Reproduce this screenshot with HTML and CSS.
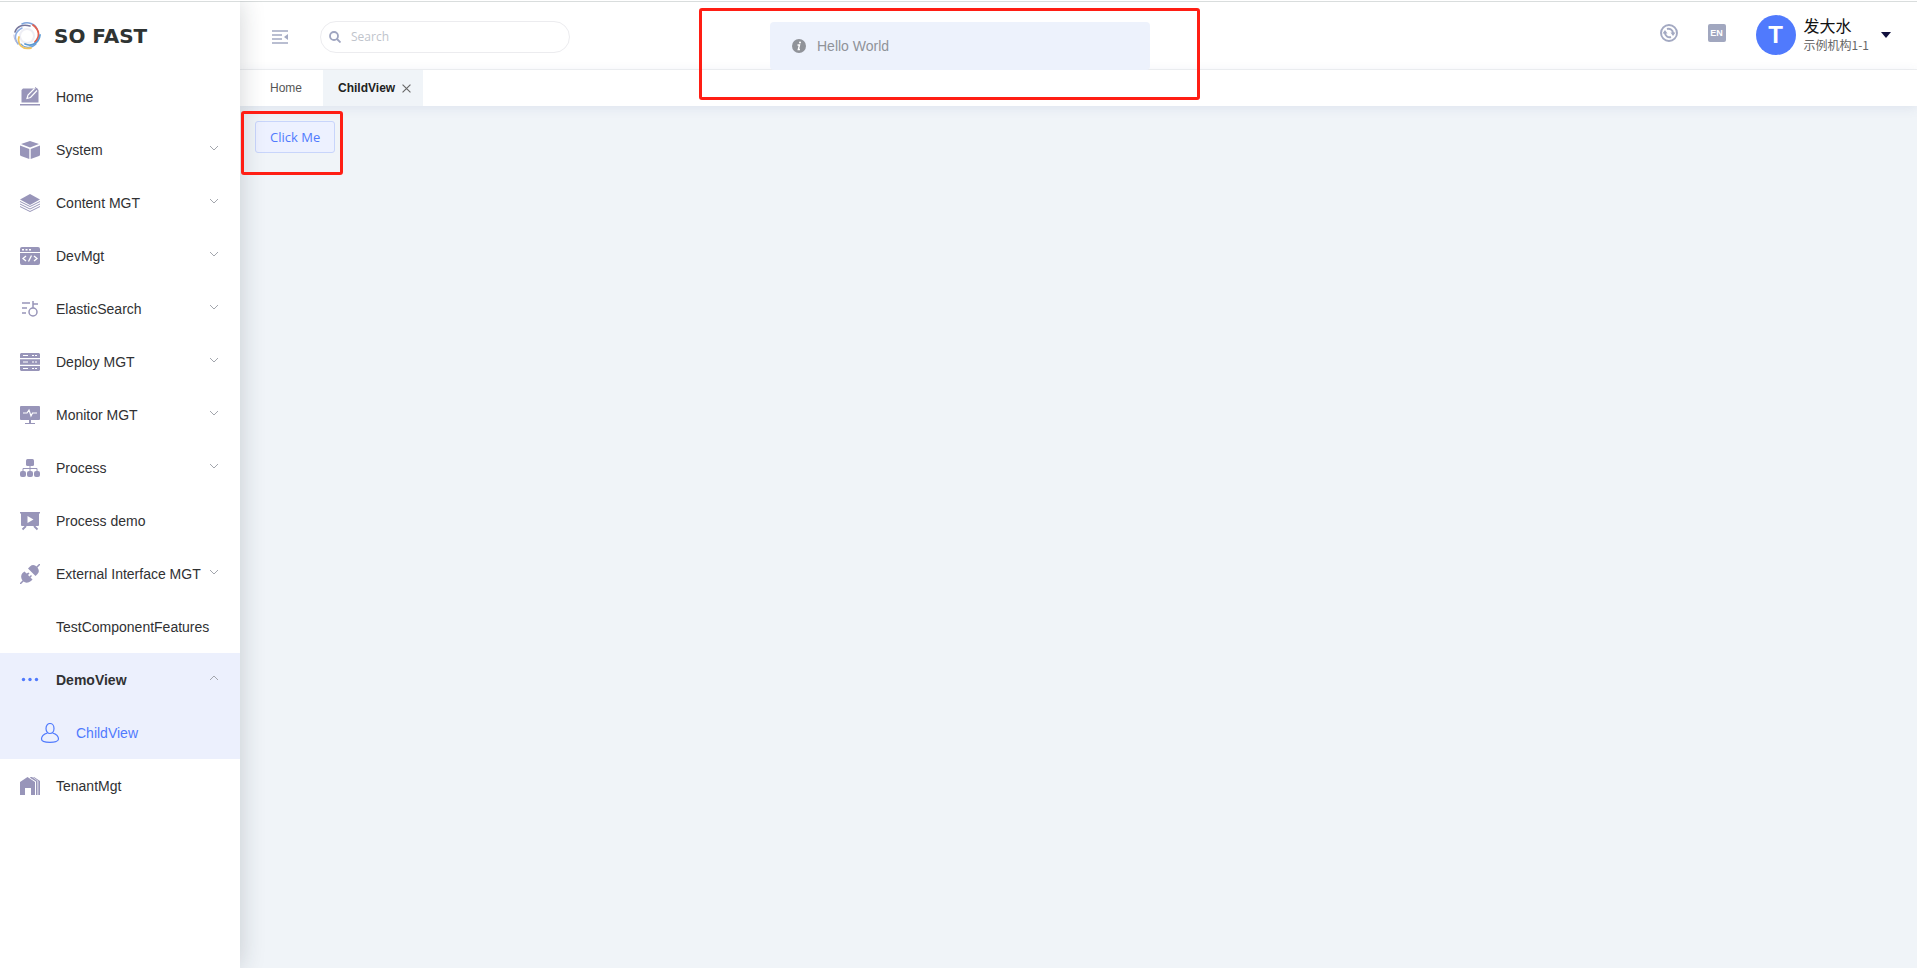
FILE: index.html
```html
<!DOCTYPE html>
<html lang="en">

<head>
  <meta charset="UTF-8" />
  <meta name="viewport" content="width=device-width, initial-scale=1.0" />
  <title>SO FAST</title>
  <link rel="stylesheet" href="styles.css">
</head>

<body>
  <div class="app">
    <aside class="sidebar">
      <a class="logo" href="#">
        <svg class="logo-icon" viewBox="0 0 28 28" fill="none" stroke-linecap="round">
          <circle cx="14" cy="14" r="7" stroke="#eeeef4" stroke-width="2" />
          <path d="M2 10C4 4 10 2 17 4" stroke="#77779c" stroke-width="1.6" />
          <path d="M9 2C15-1 22 2 24 7" stroke="#7fa5dc" stroke-width="1.5" />
          <path d="M20 3C27 8 27 15 22 20" stroke="#e2604f" stroke-width="1.8" />
          <path d="M27 13C26 21 19 25 12 22" stroke="#5c9bd4" stroke-width="1.8" />
          <path d="M23 22C18 27 11 26 8 22" stroke="#6fa0d8" stroke-width="1.2" />
          <path d="M18 26C9 28 4 22 6 15" stroke="#f1c45e" stroke-width="1.8" />
          <path d="M5 22C0 15 3 9 9 6" stroke="#8fb0e4" stroke-width="1.5" />
          <path d="M1 13C1 16 2 19 4 21" stroke="#b9b9d8" stroke-width="1" />
        </svg>
        <span class="logo-text">SO FAST</span>
      </a>

      <nav class="menu">
        <a class="menu-item" href="#">
          <svg class="icon" viewBox="0 0 20 20">
            <path fill="currentColor" d="M3 1.500H17L18.500 3V15.500H1.500V3ZM0 17H20V18.500H0Z" />
            <path fill="none" stroke="#fff" stroke-width="1.200" d="M14.500 1.500L8 8L7 11.500L10.500 10.500L17 3.500" />
            <path fill="none" stroke="currentColor" stroke-width="1" d="M15 .5L17.500 2" />
          </svg>
          <span class="menu-text">Home</span>
        </a>
        <a class="menu-item" href="#">
          <svg class="icon" viewBox="0 0 20 20">
            <path fill="currentColor" d="M10 1L19 4L10 7.500L1 4ZM0 5.500L9.300 9V19L1 16Q0 15.500 0 14.500ZM20 5.500L10.700 9V19L19 16Q20 15.500 20 14.500Z" />
          </svg>
          <span class="menu-text">System</span>
          <svg class="arrow" viewBox="0 0 10 6"><path d="M1 1L5 5L9 1" /></svg>
        </a>
        <a class="menu-item" href="#">
          <svg class="icon" viewBox="0 0 20 20">
            <path fill="currentColor" d="M10 1L20 6.500L10 12L0 6.500Z" />
            <path fill="none" stroke="currentColor" stroke-width="1" d="M0 8.500L10 13.500L20 8.500M0 11L10 16L20 11M0 13.500L10 18.500L20 13.500" />
          </svg>
          <span class="menu-text">Content MGT</span>
          <svg class="arrow" viewBox="0 0 10 6"><path d="M1 1L5 5L9 1" /></svg>
        </a>
        <a class="menu-item" href="#">
          <svg class="icon" viewBox="0 0 20 20">
            <path fill="currentColor" d="M2 1H18Q20 1 20 3V6H0V3Q0 1 2 1ZM0 7H20V17Q20 19 18 19H2Q0 19 0 17Z" />
            <path fill="#fff" d="M2 3H4V4.500H2ZM5.500 3H7.500V4.500H5.500ZM9 3H11V4.500H9Z" />
            <path fill="none" stroke="#fff" stroke-width="1.300" d="M6 10L3 12.500L6 15M14 10L17 12.500L14 15M11.500 9.500L8.500 15.500" />
          </svg>
          <span class="menu-text">DevMgt</span>
          <svg class="arrow" viewBox="0 0 10 6"><path d="M1 1L5 5L9 1" /></svg>
        </a>
        <a class="menu-item" href="#">
          <svg class="icon" viewBox="0 0 20 20" fill="none" stroke="currentColor" stroke-width="1.500">
            <path d="M2 4H10M2 9H7M2 14H6M13 2V9M13 5H18" />
            <circle cx="13" cy="13" r="4" />
          </svg>
          <span class="menu-text">ElasticSearch</span>
          <svg class="arrow" viewBox="0 0 10 6"><path d="M1 1L5 5L9 1" /></svg>
        </a>
        <a class="menu-item" href="#">
          <svg class="icon" viewBox="0 0 20 20">
            <path fill="currentColor" d="M1 1H19L20 2V6H0V2ZM0 7.300H20V12.700H0ZM0 14H20V18L19 19H1L0 18Z" />
            <path stroke="#fff" stroke-width="1.200" d="M3 3.500H8M12 3.500H14M15 3.500H17M3 10H8M12 10H14M15 10H17M3 16.500H8M12 16.500H14M15 16.500H17" />
          </svg>
          <span class="menu-text">Deploy MGT</span>
          <svg class="arrow" viewBox="0 0 10 6"><path d="M1 1L5 5L9 1" /></svg>
        </a>
        <a class="menu-item" href="#">
          <svg class="icon" viewBox="0 0 20 20">
            <path fill="currentColor" d="M1 1H19Q20 1 20 2V14Q20 15 19 15H11V18H15V19H5V18H9V15H1Q0 15 0 14V2Q0 1 1 1Z" />
            <path fill="none" stroke="#fff" stroke-width="1.200" d="M3 8H7L9 5L11 11L12.500 8H17" />
          </svg>
          <span class="menu-text">Monitor MGT</span>
          <svg class="arrow" viewBox="0 0 10 6"><path d="M1 1L5 5L9 1" /></svg>
        </a>
        <a class="menu-item" href="#">
          <svg class="icon" viewBox="0 0 20 20" fill="currentColor">
            <rect x="6" y="1" width="8" height="7" rx="1.500" />
            <path fill="none" stroke="currentColor" d="M10 8V13M3 13V10.500H17V13" />
            <rect x="0" y="13" width="6" height="6" rx="2" />
            <rect x="7" y="13" width="6" height="6" rx="2" />
            <rect x="14" y="13" width="6" height="6" rx="2" />
          </svg>
          <span class="menu-text">Process</span>
          <svg class="arrow" viewBox="0 0 10 6"><path d="M1 1L5 5L9 1" /></svg>
        </a>
        <a class="menu-item" href="#">
          <svg class="icon" viewBox="0 0 20 20">
            <path fill="currentColor" d="M0 1H20V2.500H19V14Q19 15 18 15H2Q1 15 1 14V2.500H0Z" />
            <path fill="#fff" d="M7.500 5L13.500 8.500L7.500 12Z" />
            <path stroke="currentColor" stroke-width="1.800" d="M6 15L2.500 18.500M14 15L17.500 18.500" />
          </svg>
          <span class="menu-text">Process demo</span>
        </a>
        <a class="menu-item" href="#">
          <svg class="icon" viewBox="0 0 20 20">
            <path stroke="currentColor" stroke-width="1.500" d="M0 20L4 16M16 4L20 0" />
            <path fill="currentColor" d="M2.500 9L4.500 7.500L6.500 9.500L8.500 8.500L9.500 9.500L8 11L9.500 12.500L11 11L12 12L10.500 13.500L12.500 15.500L11 17Q6.500 20.500 3 17Q-.5 13 2.500 9ZM8 4.500L10 2.500Q13.500-.5 17 3Q20.500 7 17.500 10L15.500 12Z" />
          </svg>
          <span class="menu-text">External Interface MGT</span>
          <svg class="arrow" viewBox="0 0 10 6"><path d="M1 1L5 5L9 1" /></svg>
        </a>
        <a class="menu-item" href="#">
          <span class="icon"></span>
          <span class="menu-text">TestComponentFeatures</span>
        </a>
        <div class="submenu">
          <a class="menu-item opened" href="#">
            <svg class="icon" viewBox="0 0 20 20" fill="currentColor">
              <circle cx="3.500" cy="9.500" r="1.700" />
              <circle cx="10" cy="9.500" r="1.700" />
              <circle cx="16.500" cy="9.500" r="1.700" />
            </svg>
            <span class="menu-text">DemoView</span>
            <svg class="arrow" viewBox="0 0 10 6"><path d="M1 5L5 1L9 5" /></svg>
          </a>
          <a class="menu-item child" href="#">
            <svg class="icon" viewBox="0 0 20 20" fill="none" stroke="currentColor" stroke-width="1.200">
              <ellipse cx="10" cy="5.500" rx="4" ry="5" />
              <path d="M7.500 10C4 11 1.500 13 1.500 16C1.500 18.500 6 19.300 10 19.300S18.500 18.500 18.500 16C18.500 13 16 11 12.500 10" />
            </svg>
            <span class="menu-text">ChildView</span>
          </a>
        </div>
        <a class="menu-item" href="#">
          <svg class="icon" viewBox="0 0 20 20" fill="currentColor">
            <path d="M0 6L7.500 1L15 6V19H11V12H5V19H0Z" />
            <path d="M10.500 1H12L17.500 5V19H16V5.500L10 1.800Z" />
            <path d="M14 1L20 5V19H18.300V5L13 1.300Z" />
          </svg>
          <span class="menu-text">TenantMgt</span>
        </a>
      </nav>
    </aside>

    <div class="main">
      <header class="header">
        <button class="icon-button" type="button" aria-label="Collapse menu">
          <svg class="fold-icon" viewBox="0 0 16 14">
            <path stroke="currentColor" stroke-width="1.400" d="M0 1H16M0 5H10M0 9H10M0 13H16" />
            <path fill="currentColor" d="M16 4V10L12 7Z" />
          </svg>
        </button>
        <label class="search">
          <svg class="search-icon" viewBox="0 0 12 12" fill="none" stroke="currentColor" stroke-width="1.800">
            <circle cx="5" cy="5" r="4" />
            <path d="M8 8L11.500 11.500" />
          </svg>
          <input class="search-input" type="text" placeholder="Search" aria-label="Search">
        </label>
        <div class="tools">
          <button class="icon-button" type="button" aria-label="Refresh">
            <svg class="tool-icon" viewBox="0 0 18 18" fill="none" stroke="currentColor">
              <circle cx="9" cy="9" r="8" stroke-width="1.900" />
              <path stroke-width="2" d="M7 5A4.500 4.500 0 0 1 13 9M11 13A4.500 4.500 0 0 1 5 9" />
              <path fill="currentColor" stroke="none" d="M10.500 8.500H15.500L13 12ZM2.500 9.500H7.500L5 6Z" />
            </svg>
          </button>
          <button class="lang" type="button">EN</button>
        </div>
        <button class="user" type="button">
          <span class="avatar">T</span>
          <span class="user-info">
            <span class="user-name">发大水</span>
            <span class="user-org">示例机构1-1</span>
          </span>
          <span class="caret"></span>
        </button>
      </header>

      <div class="tabs">
        <a class="tab" href="#">Home</a>
        <a class="tab active" href="#">ChildView
          <svg class="tab-close" viewBox="0 0 8 8"><path d="M.5 .5L7.500 7.500M7.500 .5L.5 7.500" /></svg>
        </a>
      </div>

      <main class="content">
        <button class="button" type="button">Click Me</button>
      </main>
    </div>
  </div>

  <div class="message" role="alert">
    <svg class="message-icon" viewBox="0 0 14 14">
      <circle cx="7" cy="7" r="7" fill="#909399" />
      <path fill="none" stroke="#fff" stroke-width="1.400" d="M5.500 6H7.500L6.300 10.500H8" />
      <circle cx="8" cy="3.500" r="1" fill="#fff" />
    </svg>
    <span>Hello World</span>
  </div>

  <div class="mark mark-message"></div>
  <div class="mark mark-button"></div>
</body>

</html>
```
FILE: styles.css
```css
* {
  box-sizing: border-box;
}

body {
  margin: 0;
  font-family: "Liberation Sans", Arial, "Noto Sans CJK SC", sans-serif;
  font-size: 14px;
  color: #303133;
  background-color: #f0f4f8;
}

a {
  color: inherit;
  text-decoration: none;
}

button {
  font-family: inherit;
  cursor: pointer;
}

.app {
  display: flex;
  min-height: 100vh;
  border-top: 1px solid #fff;
}

/* sidebar */
.sidebar {
  position: relative;
  z-index: 2;
  flex: none;
  width: 240px;
  border-top: 1px solid #d9dddd;
  background-color: #fff;
  box-shadow: 0 0 24px rgba(30, 40, 50, 0.2);
  clip-path: inset(0 -30px 0 0);
}

.logo {
  display: flex;
  align-items: center;
  gap: 13px;
  height: 68px;
  padding: 0 0 0 13px;
}

.logo-icon {
  width: 28px;
  height: 28px;
}

.logo-text {
  font-family: "DejaVu Sans", sans-serif;
  font-size: 20px;
  font-weight: bold;
  line-height: 24px;
  color: #2f3433;
}

.menu-item {
  display: flex;
  align-items: center;
  height: 53px;
  padding: 0 21px 0 20px;
}

.icon {
  flex: none;
  width: 20px;
  height: 20px;
  margin-right: 16px;
  color: #9895b9;
}

.menu-text {
  flex: 1;
  white-space: nowrap;
}

.arrow {
  flex: none;
  width: 10px;
  height: 6px;
  margin-bottom: 4px;
  fill: none;
  stroke: #a3a6ad;
}

.submenu {
  background-color: #ecf0fd;
}

.opened {
  font-weight: bold;
}

.opened .icon,
.child,
.child .icon {
  color: #507afd;
}

.child {
  padding-left: 40px;
}

/* header */
.main {
  flex: 1;
  min-width: 0;
}

.header {
  display: flex;
  align-items: center;
  height: 69px;
  padding: 2px 26px 0 32px;
  border-top: 1px solid #d9dddd;
  border-bottom: 1px solid #f0f1f2;
  background-color: #fff;
}

.icon-button {
  display: flex;
  padding: 0;
  border: none;
  background: none;
  color: #a3a9c2;
}

.fold-icon {
  width: 16px;
  height: 14px;
}

.search {
  display: flex;
  align-items: center;
  gap: 10px;
  width: 250px;
  height: 32px;
  margin-left: 32px;
  padding: 0 12px 0 8px;
  border: 1px solid #ececef;
  border-radius: 16px;
  color: #9fa5c0;
}

.search-icon {
  flex: none;
  width: 12px;
  height: 12px;
}

.search-input {
  flex: 1;
  min-width: 0;
  padding: 0;
  border: none;
  outline: none;
  background: none;
  font-family: "Open Sans", sans-serif;
  font-size: 12px;
}

.search-input::placeholder {
  color: #c0c4cc;
}

.tools {
  display: flex;
  gap: 30px;
  margin: 0 30px 8px auto;
}

.tool-icon {
  width: 18px;
  height: 18px;
}

.lang {
  width: 18px;
  height: 18px;
  padding: 0;
  border: none;
  border-radius: 2px;
  background-color: #a1a7bf;
  color: #fff;
  font-size: 9px;
  font-weight: bold;
  line-height: 18px;
}

.user {
  display: flex;
  align-items: center;
  margin-bottom: 4px;
  padding: 0;
  border: none;
  background: none;
  text-align: left;
}

.avatar {
  width: 40px;
  height: 40px;
  margin-right: 8px;
  border-radius: 50%;
  background-color: #507afd;
  color: #fff;
  font-size: 24px;
  font-weight: bold;
  line-height: 40px;
  text-align: center;
}

.user-info {
  display: flex;
  flex-direction: column;
  margin-right: 12px;
  font-family: "Noto Sans CJK SC", sans-serif;
}

.user-name {
  font-size: 16px;
  line-height: 20px;
  color: #111;
}

.user-org {
  font-size: 12px;
  line-height: 20px;
  color: #666;
}

.caret {
  border: 5px solid transparent;
  border-top: 6px solid #11103e;
  border-bottom: none;
}

/* tabs */
.tabs {
  position: relative;
  display: flex;
  height: 36px;
  padding-left: 10px;
  background-color: #fff;
  box-shadow: 0 2px 12px rgba(70, 90, 150, 0.1);
}

.tab {
  display: flex;
  align-items: center;
  padding: 0 21px 0 20px;
  font-size: 12px;
  color: #555;
}

.tab.active {
  gap: 7px;
  padding: 0 12px 0 15px;
  background-color: #f0f4f8;
  color: #222;
  font-weight: bold;
}

.tab-close {
  width: 9px;
  height: 9px;
  fill: none;
  stroke: #666;
}

/* content */
.content {
  padding: 15px;
}

.button {
  height: 32px;
  padding: 0 14px;
  border: 1px solid #c8d5fb;
  border-radius: 3px;
  background-color: #edf1ff;
  color: #507afd;
  font-family: "Open Sans", sans-serif;
  font-size: 13px;
}

.message {
  position: fixed;
  z-index: 3;
  top: 22px;
  left: 770px;
  display: flex;
  align-items: center;
  gap: 11px;
  width: 380px;
  height: 48px;
  padding: 0 22px;
  border-radius: 4px;
  background-color: #edf2fc;
  color: #909399;
}

.message-icon {
  width: 14px;
  height: 14px;
}

/* red frames */
.mark {
  position: absolute;
  z-index: 4;
  border: 3px solid #ff1e14;
  border-radius: 3px;
  pointer-events: none;
}

.mark-message {
  top: 8px;
  left: 699px;
  width: 501px;
  height: 92px;
}

.mark-button {
  top: 111px;
  left: 241px;
  width: 102px;
  height: 64px;
}
```
